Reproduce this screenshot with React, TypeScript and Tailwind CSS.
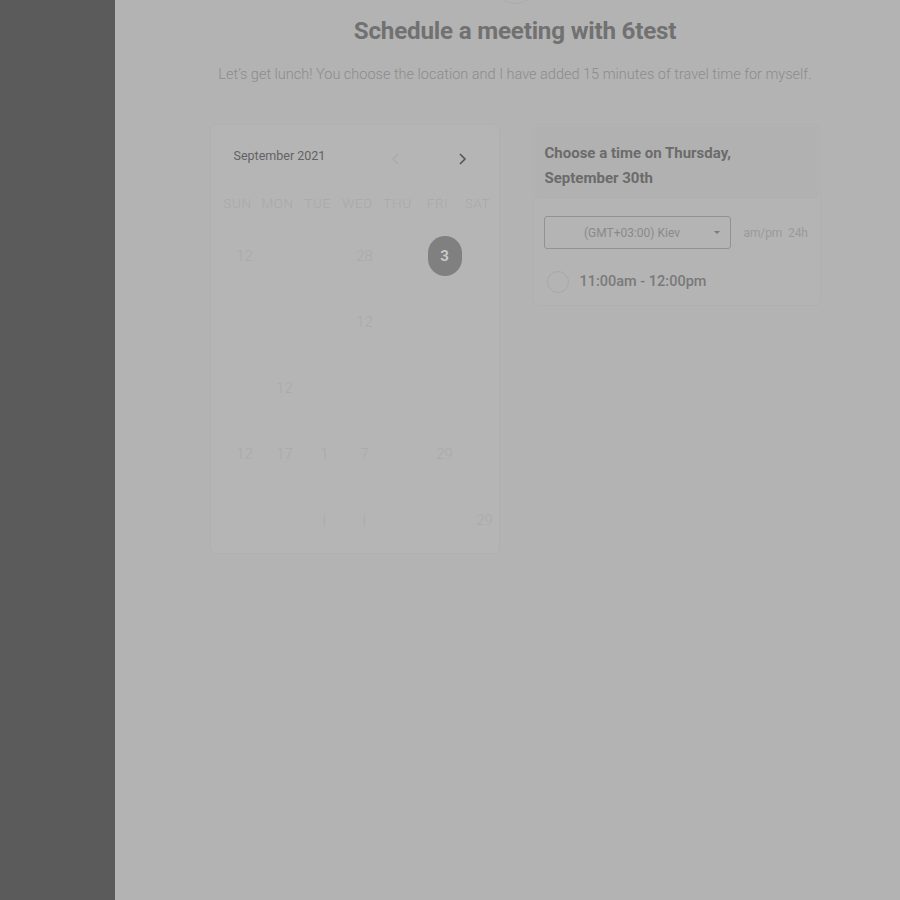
import React from "react";

const days = ["SUN", "MON", "TUE", "WED", "THU", "FRI", "SAT"];

type Cell = { t: string; sel?: boolean } | null;

const rows: Cell[][] = [
  [{ t: "12" }, null, null, { t: "28" }, null, { t: "3", sel: true }, null],
  [null, null, null, { t: "12" }, null, null, null],
  [null, { t: "12" }, null, null, null, null, null],
  [{ t: "12" }, { t: "17" }, { t: "1" }, { t: "7" }, null, { t: "29" }, null],
  [null, null, { t: "|" }, { t: "|" }, null, null, { t: "29" }],
];

export default function App() {
  return (
    <div
      className="flex w-[900px] h-[900px] overflow-hidden bg-[#b3b3b3]"
      style={{ fontFamily: "Roboto, 'Liberation Sans', sans-serif" }}
    >
      <div className="w-[115px] shrink-0 bg-[#5b5b5b]" />
      <div className="flex-1 relative flex flex-col items-center pl-[15px]">
        <div className="absolute -top-[40px] left-[378px] w-[44px] h-[44px] rounded-full border border-[#acacac]" />
        <h1 className="mt-[15px] text-[24.2px] leading-[32px] font-bold text-[#717171] tracking-[-0.2px]">
          Schedule a meeting with 6test
        </h1>
        <p className="mt-[18px] text-[14.5px] leading-[20px] font-light text-[#8c8c8c]">
          Let’s get lunch! You choose the location and I have added 15 minutes of travel time for myself.
        </p>
        <div className="mt-[39px] flex gap-[33px] items-start">
          {/* Calendar */}
          <div className="w-[290px] h-[430px] rounded-[6px] border border-[#b0b0b0] bg-[#b5b5b5] px-[7px] pt-[21px]">
            <div className="flex items-center justify-between pl-[16px] pr-[25px]">
              <span className="text-[12.5px] text-[#626262]">September 2021</span>
              <div className="flex items-center gap-[56px] mt-[6px]">
                <svg width="10" height="14" viewBox="0 0 10 14" fill="none">
                  <path d="M7 2 L2 7 L7 12" stroke="#ababab" strokeWidth="1.4" />
                </svg>
                <svg width="10" height="14" viewBox="0 0 10 14" fill="none">
                  <path d="M3 2 L8 7 L3 12" stroke="#555" strokeWidth="1.6" />
                </svg>
              </div>
            </div>
            <div className="mt-[27px] grid grid-cols-[repeat(7,40px)] text-center text-[13.5px] font-light tracking-[0.6px] text-[#a9a9a9]">
              {days.map((d) => (
                <span key={d}>{d}</span>
              ))}
            </div>
            <div className="mt-[23px] ml-[7px] flex flex-col gap-[26px]">
              {rows.map((r, i) => (
                <div key={i} className="grid grid-cols-[repeat(7,40px)] h-[40px] items-center">
                  {r.map((c, j) => (
                    <div key={j} className="flex justify-center">
                      {c ? (
                        c.sel ? (
                          <span className="w-[34px] h-[40px] rounded-full bg-[#808080] text-[#c9c9c9] text-[15px] font-bold flex items-center justify-center">
                            {c.t}
                          </span>
                        ) : (
                          <span className="text-[15px] font-light text-[#aaaaaa]">{c.t}</span>
                        )
                      ) : null}
                    </div>
                  ))}
                </div>
              ))}
            </div>
          </div>
          {/* Time panel */}
          <div className="w-[288px] h-[182px] rounded-[6px] border border-[#b0b0b0] bg-[#b4b4b4]">
            <div className="m-[1px] bg-[#b1b1b1] rounded-[4px] px-[10px] pt-[15px] pb-[10px] h-[73px]">
              <p className="text-[15px] leading-[25px] font-bold text-[#6b6b6b]">
                Choose a time on Thursday,
                <br />
                September 30th
              </p>
            </div>
            <div className="mt-[17px] pl-[10px] flex items-center">
              <div className="relative w-[187px] h-[33px] rounded-[3px] border border-[#929292] flex items-center justify-center">
                <span className="text-[12px] text-[#8a8a8a] -ml-[10px]">(GMT+03:00) Kiev</span>
                <svg className="absolute right-[10px] top-[14px]" width="6" height="4" viewBox="0 0 6 4">
                  <path d="M0 0 L6 0 L3 3 Z" fill="#7a7a7a" />
                </svg>
              </div>
              <span className="ml-[13px] text-[12px] text-[#9a9a9a] tracking-[-0.1px]">am/pm&nbsp; 24h</span>
            </div>
            <div className="mt-[22px] pl-[13px] flex items-center">
              <span className="w-[22px] h-[22px] rounded-full border border-[#a8a8a8]" />
              <span className="ml-[11px] text-[14.5px] font-medium text-[#7a7a7a]">11:00am - 12:00pm</span>
            </div>
          </div>
        </div>
      </div>
    </div>
  );
}
